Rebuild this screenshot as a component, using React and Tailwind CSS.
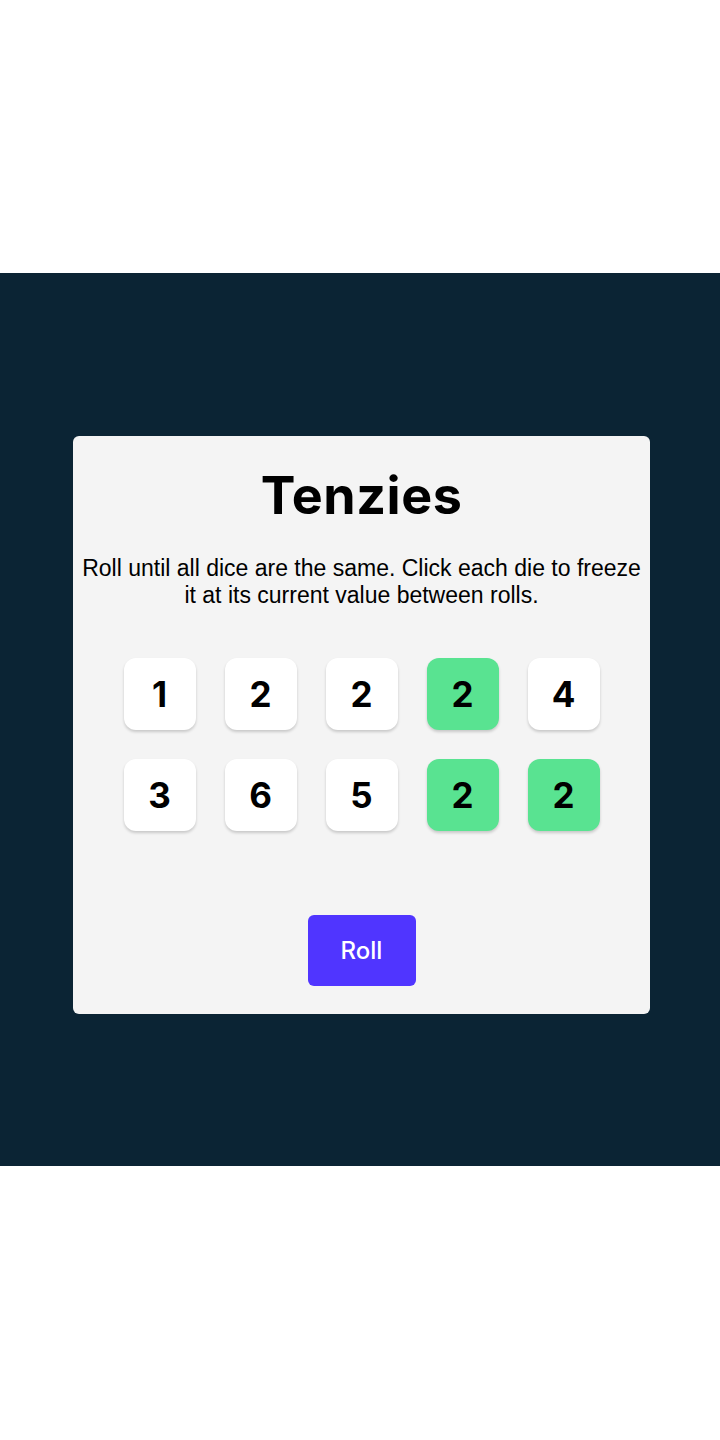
import React from 'react';

const dice = [
  { value: 1, held: false },
  { value: 2, held: false },
  { value: 2, held: false },
  { value: 2, held: true },
  { value: 4, held: false },
  { value: 3, held: false },
  { value: 6, held: false },
  { value: 5, held: false },
  { value: 2, held: true },
  { value: 2, held: true },
];

const Die = ({ value, held }) => (
  <button
    className={`w-[72px] h-[72px] rounded-[12px] flex items-center justify-center shadow-[0_2px_3px_rgba(0,0,0,0.18)] text-[35px] font-bold text-black ${
      held ? 'bg-[#59E391]' : 'bg-white'
    }`}
    style={{ fontFamily: 'Inter, "Noto Sans", sans-serif' }}
  >
    {value}
  </button>
);

export default function App() {
  return (
    <div className="min-h-[1440px] bg-white pt-[273px]">
      <section className="h-[893px] bg-[#0B2434] px-[73px] pt-[163px]">
        <main className="w-[577px] h-[578px] bg-[#F4F4F4] rounded-[6px] flex flex-col items-center pt-[34px]">
          <h1
            className="text-[52px] leading-none font-bold text-black tracking-[0.01em]"
            style={{ fontFamily: 'Inter, "Noto Sans", sans-serif' }}
          >
            Tenzies
          </h1>
          <p
            className="mt-[33px] text-[23px] leading-[27px] text-black text-center px-[4px]"
            style={{ fontFamily: '"Liberation Sans", Arial, sans-serif' }}
          >
            Roll until all dice are the same. Click each die to freeze it at its current value between rolls.
          </p>
          <div className="mt-[49px] grid grid-cols-5 gap-x-[29px] gap-y-[29px]">
            {dice.map((d, i) => (
              <Die key={i} value={d.value} held={d.held} />
            ))}
          </div>
          <button
            className="mt-[84px] w-[108px] h-[71px] rounded-[6px] bg-[#5035FF] text-white text-[24px] font-medium"
            style={{ fontFamily: 'Inter, "Noto Sans", sans-serif' }}
          >
            Roll
          </button>
        </main>
      </section>
    </div>
  );
}
